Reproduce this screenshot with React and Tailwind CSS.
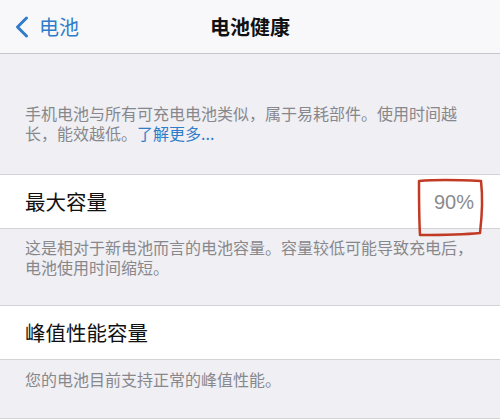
export default function App() {
  const font = { fontFamily: '"Noto Sans CJK SC", "Noto Sans", sans-serif' };
  return (
    <div className="w-[500px] h-[420px] overflow-hidden bg-[#efeff4] relative" style={font}>
      {/* Nav bar */}
      <div className="h-[54px] bg-[#f8f8fa] border-b border-[#c6c6cb] flex items-center relative">
        <div className="flex items-center pl-[14px] text-[#2f7cc9]">
          <svg width="16" height="24" viewBox="0 0 16 24" className="mt-[1px]">
            <path d="M12.5 3 L3.5 12 L12.5 21" fill="none" stroke="#2f7cc9" strokeWidth="3" strokeLinecap="round" strokeLinejoin="round" />
          </svg>
          <span className="ml-[9px] text-[20px] leading-none">电池</span>
        </div>
        <div className="absolute left-0 right-0 text-center text-[20px] font-semibold text-[#111] leading-none pointer-events-none">
          电池健康
        </div>
      </div>

      {/* Description 1 */}
      <div className="pt-[49px] pb-[31px] pl-[25px] text-[16px] leading-[20px] text-[#88888c]">
        <div>手机电池与所有可充电电池类似，属于易耗部件。使用时间越</div>
        <div>
          长，能效越低。<span className="text-[#2f7cc9]">了解更多...</span>
        </div>
      </div>

      {/* Row 1 */}
      <div className="h-[55px] bg-white border-y border-[#d3d3d7] flex items-center justify-between pl-[25px] pr-[26px]">
        <span className="text-[20.5px] text-[#111] leading-none">最大容量</span>
        <span className="text-[20px] text-[#8a8a8e] leading-none" style={{ fontFamily: '"Liberation Sans", Arial, sans-serif' }}>90%</span>
      </div>

      {/* Description 2 */}
      <div className="pt-[8px] pb-[28px] pl-[25px] text-[16px] leading-[20px] text-[#88888c]">
        <div>这是相对于新电池而言的电池容量。容量较低可能导致充电后，</div>
        <div>电池使用时间缩短。</div>
      </div>

      {/* Row 2 */}
      <div className="h-[55px] bg-white border-y border-[#d3d3d7] flex items-center pl-[25px]">
        <span className="text-[20.5px] text-[#111] leading-none">峰值性能容量</span>
      </div>

      {/* Description 3 */}
      <div className="pt-[9px] pb-[29px] pl-[25px] text-[16px] leading-[20px] text-[#88888c] border-b border-[#d3d3d7]">
        您的电池目前支持正常的峰值性能。
      </div>
      <div className="h-[10px] bg-white" />

      {/* Red hand-drawn box */}
      <svg className="absolute left-0 top-0 pointer-events-none" width="500" height="420">
        <path
          d="M419 181 C440 179, 462 180, 481 181 C483 198, 482 216, 480 233 C460 235, 440 235, 420 235 C419 217, 419 198, 419 181"
          fill="none"
          stroke="#c23a24"
          strokeWidth="2.5"
          strokeLinecap="round"
          strokeLinejoin="round"
        />
      </svg>
    </div>
  );
}
